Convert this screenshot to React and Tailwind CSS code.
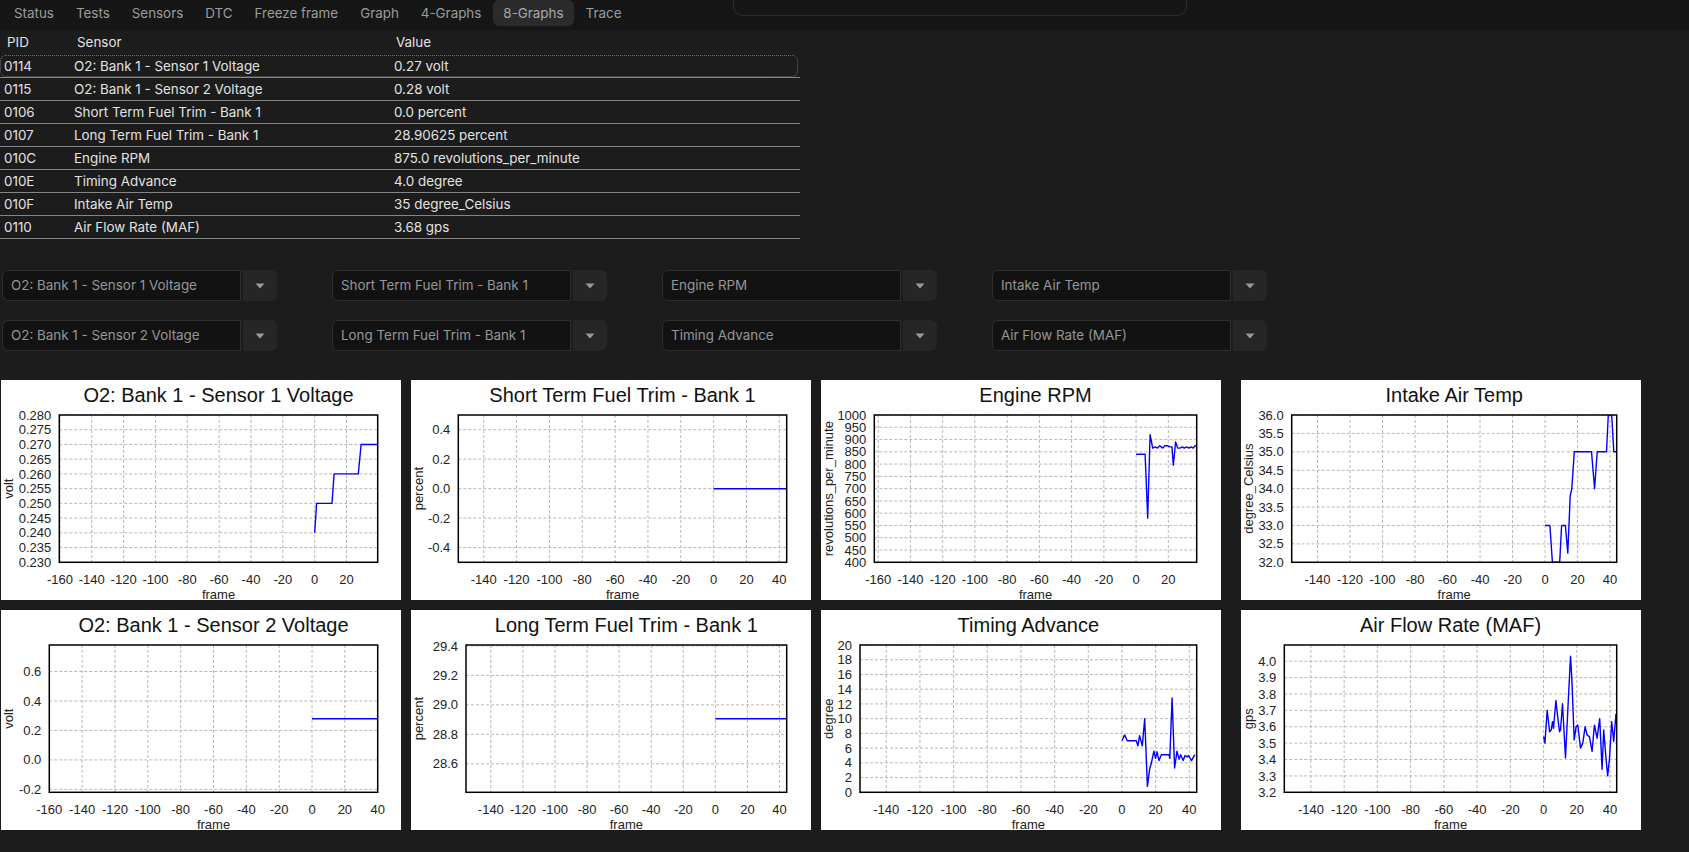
import React from 'react';

const tabs = ['Status', 'Tests', 'Sensors', 'DTC', 'Freeze frame', 'Graph', '4-Graphs', '8-Graphs', 'Trace'];

const rows = [
  ['0114', 'O2: Bank 1 - Sensor 1 Voltage', '0.27 volt'],
  ['0115', 'O2: Bank 1 - Sensor 2 Voltage', '0.28 volt'],
  ['0106', 'Short Term Fuel Trim - Bank 1', '0.0 percent'],
  ['0107', 'Long Term Fuel Trim - Bank 1', '28.90625 percent'],
  ['010C', 'Engine RPM', '875.0 revolutions_per_minute'],
  ['010E', 'Timing Advance', '4.0 degree'],
  ['010F', 'Intake Air Temp', '35 degree_Celsius'],
  ['0110', 'Air Flow Rate (MAF)', '3.68 gps'],
];

const selects = [
  ['O2: Bank 1 - Sensor 1 Voltage', 'Short Term Fuel Trim - Bank 1', 'Engine RPM', 'Intake Air Temp'],
  ['O2: Bank 1 - Sensor 2 Voltage', 'Long Term Fuel Trim - Bank 1', 'Timing Advance', 'Air Flow Rate (MAF)'],
];

// tick helper, rounded so labels don't pick up float noise
const steps = (a, b, s) => {
  const out = [];
  for (let i = 0; a + i * s <= b + 1e-9; i++) out.push(Math.round((a + i * s) * 1e6) / 1e6);
  return out;
};

const charts = [
  {
    id: 'o2s1', title: 'O2: Bank 1 - Sensor 1 Voltage', unit: 'volt', left: 58.3, right: 376.7, xmax: 39.6,
    ymin: 0.23, ymax: 0.28, ticks: steps(0.23, 0.28, 0.005), dec: 3,
    data: [[0, 0.24], [1.2, 0.25], [10.9, 0.25], [12.2, 0.26], [27.4, 0.26], [29.2, 0.27], [39.6, 0.27]],
  },
  {
    id: 'stft', title: 'Short Term Fuel Trim - Bank 1', unit: 'percent', left: 47.3, xmax: 44.5,
    ymin: -0.5, ymax: 0.5, ticks: steps(-0.4, 0.4, 0.2), dec: 1,
    data: [[0, 0], [44.5, 0]],
  },
  {
    id: 'rpm', title: 'Engine RPM', unit: 'revolutions_per_minute', left: 53.3, xmax: 37.6,
    ymin: 400, ymax: 1000, ticks: steps(400, 1000, 50), dec: 0,
    data: [[0, 840], [5.6, 840], [7.2, 580], [8.7, 920], [10.3, 865], [11.8, 870], [13.2, 865], [14.8, 875], [16.5, 865], [17.9, 875], [19.4, 875], [21, 870], [22.3, 870], [23.1, 795], [24.5, 890], [25.8, 865], [27.2, 865], [28.7, 870], [29.9, 865], [31.3, 870], [32.8, 865], [34, 870], [35.5, 865], [36.5, 875], [37.6, 872]],
  },
  {
    id: 'iat', title: 'Intake Air Temp', unit: 'degree_Celsius', left: 50.7, xmax: 44.1,
    ymin: 32, ymax: 36, ticks: steps(32, 36, 0.5), dec: 1,
    data: [[0, 33], [3, 33], [4.5, 32], [9, 32], [10.2, 33], [12.5, 33], [14, 32.25], [15.5, 33.8], [16.5, 34], [18, 35], [28.6, 35], [30.5, 34], [32.1, 35], [37.8, 35], [38.9, 36], [41, 36], [42.3, 35], [44.1, 35]],
  },
  {
    id: 'o2s2', title: 'O2: Bank 1 - Sensor 2 Voltage', unit: 'volt', left: 48.3, right: 376.7, xmax: 40,
    ymin: -0.22, ymax: 0.78, ticks: steps(-0.2, 0.6, 0.2), dec: 1,
    data: [[0, 0.28], [40, 0.28]],
  },
  {
    id: 'ltft', title: 'Long Term Fuel Trim - Bank 1', unit: 'percent', left: 55, xmax: 44.5,
    ymin: 28.40625, ymax: 29.40625, ticks: steps(28.6, 29.4, 0.2), dec: 1,
    data: [[0, 28.90625], [44.5, 28.90625]],
  },
  {
    id: 'timing', title: 'Timing Advance', unit: 'degree', left: 39, xmax: 44.4,
    ymin: 0, ymax: 20, ticks: steps(0, 20, 2), dec: 0,
    data: [[0, 7], [1.6, 7.8], [3.2, 7], [8.5, 7], [9.5, 6.3], [10.5, 7.7], [12.1, 6.3], [13.5, 10], [15.1, 0.8], [16.5, 3.2], [17.5, 4], [19, 5.6], [20, 4.6], [20.8, 5.5], [22, 4.3], [23.4, 5.1], [28, 5.1], [28.4, 4.6], [29.8, 12.8], [31.3, 3.3], [32.7, 5.6], [33.9, 4.5], [34.9, 5.1], [36.3, 4.3], [37.5, 5], [38.7, 4.8], [39.5, 5], [41.3, 4.3], [43.3, 5.1]],
  },
  {
    id: 'maf', title: 'Air Flow Rate (MAF)', unit: 'gps', left: 43.3, xmax: 44,
    ymin: 3.2, ymax: 4.099, ticks: steps(3.2, 4.0, 0.1), dec: 1,
    data: [[0, 3.54], [0.8, 3.5], [2.2, 3.7], [3.6, 3.57], [4.6, 3.58], [5.4, 3.63], [6, 3.59], [7.4, 3.76], [8.6, 3.65], [9.6, 3.57], [10.2, 3.58], [11.4, 3.74], [13.2, 3.41], [14.6, 3.7], [16.2, 4.03], [17, 3.9], [18.4, 3.52], [19.6, 3.6], [20.6, 3.61], [22.2, 3.47], [23.6, 3.5], [25, 3.6], [26.2, 3.55], [27.6, 3.54], [29.2, 3.45], [30.6, 3.61], [32.2, 3.53], [33.8, 3.65], [35.2, 3.34], [36.2, 3.58], [37.6, 3.4], [38.6, 3.3], [39.6, 3.4], [41, 3.63], [42.2, 3.51], [43.6, 3.68]],
  },
];

const FONT = '"Liberation Sans", Arial, sans-serif';

const Chart = ({ c }) => {
  const T = 35, B = 182.3;
  const L = c.left, R = c.right ?? 375.7;
  const xmin = c.xmax - 200;
  const sx = (x) => L + ((x - xmin) / (c.xmax - xmin)) * (R - L);
  const sy = (y) => B - ((y - c.ymin) / (c.ymax - c.ymin)) * (B - T);
  const xt = [];
  for (let v = Math.ceil(xmin / 20) * 20; v <= c.xmax; v += 20) xt.push(v);
  const mid = (L + R) / 2;

  return (
    <div className="w-[400px] h-[220px] bg-white shrink-0 overflow-hidden">
      <svg width="400" height="220" viewBox="0 0 400 220" style={{ fontFamily: FONT }}>
        <defs>
          <clipPath id={`clip-${c.id}`}>
            <rect x={L} y={T} width={R - L} height={B - T} />
          </clipPath>
        </defs>
        <text x={mid} y="22" textAnchor="middle" fontSize="20" fill="#111">{c.title}</text>

        {xt.map((v) => (
          <line key={`gx${v}`} x1={sx(v)} x2={sx(v)} y1={T} y2={B} stroke="#b8b8b8" strokeDasharray="3 2" />
        ))}
        {c.ticks.map((v) => (
          <line key={`gy${v}`} x1={L} x2={R} y1={sy(v)} y2={sy(v)} stroke="#b8b8b8" strokeDasharray="3 2" />
        ))}

        <polyline
          clipPath={`url(#clip-${c.id})`}
          points={c.data.map(([x, y]) => `${sx(x).toFixed(1)},${sy(y).toFixed(1)}`).join(' ')}
          fill="none" stroke="#0000ff" strokeWidth="1.4" strokeLinejoin="round"
        />
        <rect x={L} y={T} width={R - L} height={B - T} fill="none" stroke="#000" strokeWidth="1.5" />

        {c.ticks.map((v) => (
          <text key={`ty${v}`} x={L - 8} y={sy(v) + 4.6} textAnchor="end" fontSize="13" fill="#222">
            {v.toFixed(c.dec)}
          </text>
        ))}
        {xt.map((v) => (
          <text key={`tx${v}`} x={sx(v)} y="203.5" textAnchor="middle" fontSize="13" fill="#222">{v}</text>
        ))}
        <text x={mid} y="218.5" textAnchor="middle" fontSize="13" fill="#222">frame</text>
        <text transform={`translate(12, ${(T + B) / 2}) rotate(-90)`} textAnchor="middle" fontSize="13" fill="#222">
          {c.unit}
        </text>
      </svg>
    </div>
  );
};

const Caret = () => (
  <svg width="10" height="6" viewBox="0 0 10 6">
    <path d="M0.5 0.5 L9.5 0.5 L5 5.5 Z" fill="#9a9a9a" />
  </svg>
);

const Combo = ({ label }) => (
  <div className="flex h-[31px] w-[275px] shrink-0 gap-[2px]">
    <div className="flex w-[239px] items-center rounded-l-[6px] border border-[#2e2e2e] bg-[#121212] pl-[8px] text-[#969696]">
      {label}
    </div>
    <div className="flex w-[34px] items-center justify-center rounded-r-[6px] bg-[#262626]">
      <Caret />
    </div>
  </div>
);

const Cells = ({ r, header }) => (
  <>
    <div className={header ? 'w-[69px] pl-[7px]' : 'w-[69px] pl-[3px]'}>{r[0]}</div>
    <div className={header ? 'w-[320px] pl-[8px]' : 'w-[320px] pl-[4px]'}>{r[1]}</div>
    <div className={header ? 'pl-[7px]' : 'pl-[4px]'}>{r[2]}</div>
  </>
);

export default function App() {
  return (
    <div className="min-h-screen w-full bg-[#1c1c1c] font-[Inter,sans-serif] text-[13.4px] overflow-hidden">
      {/* Tab bar */}
      <div className="flex h-[30px] items-start bg-[#161616]">
        <div className="flex gap-[2px] pl-[4px]">
          {tabs.map((t) => (
            <div
              key={t}
              className={`flex h-[26px] items-center rounded-[6px] px-[10px] ${
                t === '8-Graphs' ? 'bg-[#2b2b2b] text-[#a8a8a8]' : 'text-[#9c9c9c]'
              }`}
            >
              {t}
            </div>
          ))}
        </div>
        <div className="ml-[102px] h-[16px] w-[454px] rounded-b-[10px] border-x border-b border-[#2c2c2c]" />
      </div>

      {/* PID table */}
      <div className="w-[800px] text-[#e2e2e2]">
        <div className="flex h-[25px] items-center">
          <Cells r={['PID', 'Sensor', 'Value']} header />
        </div>
        {rows.map((r, i) => (
          <div key={r[0]} className="h-[23px] border-b border-[#858585]">
            <div
              className={`flex h-[22px] items-center ${
                i === 0 ? 'mr-[2px] rounded-[6px] border border-dotted border-[#6e6e6e]' : 'pl-px'
              }`}
            >
              <Cells r={r} />
            </div>
          </div>
        ))}
      </div>

      {/* Sensor selectors */}
      <div className="mt-[31px] flex flex-col gap-[19px] pl-[2px]">
        {selects.map((row, i) => (
          <div key={i} className="flex gap-[55px]">
            {row.map((s) => (
              <Combo key={s} label={s} />
            ))}
          </div>
        ))}
      </div>

      {/* Graphs */}
      <div className="mt-[29px] flex flex-col gap-[10px] pl-px">
        {[charts.slice(0, 4), charts.slice(4)].map((row, i) => (
          <div key={i} className="flex gap-[10px]">
            {row.map((c, j) => (
              <div key={c.id} className={j === 3 ? 'ml-[10px]' : ''}>
                <Chart c={c} />
              </div>
            ))}
          </div>
        ))}
      </div>
    </div>
  );
}
